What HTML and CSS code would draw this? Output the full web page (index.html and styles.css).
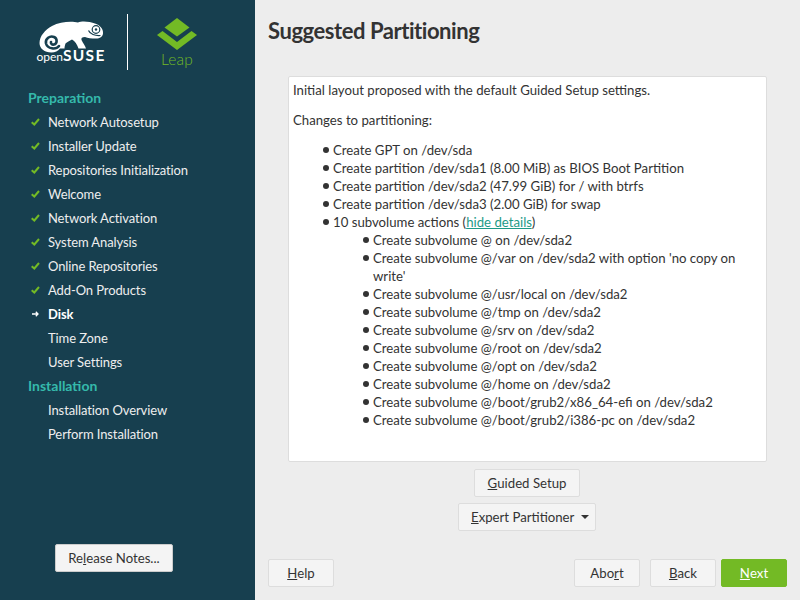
FILE: index.html
```html
<!DOCTYPE html>
<html lang="en">
<head>
<meta charset="utf-8">
<title>Suggested Partitioning</title>
<link rel="stylesheet" href="styles.css">
</head>
<body>
<div class="app">
  <aside class="sidebar">
    <header class="logos">
      <svg class="logo-suse" width="80" height="60" viewBox="30 10 80 60">
        <path class="white" d="M39.500 43C39.500 36 45 30 52 26C60 21.500 72 21 78 22.500C82 20.500 90 21.500 95 23.500C100 25 103.500 29 103 33.500C102.500 37 100 38.500 96 38.500C91 38.500 88 38 85 37C82 37 81 38 81.500 40C83 43 85 45.500 86 48.500L78.500 48.500C77 44.500 75 41 72 39.500C69.500 41 67 42 65.500 43.500C65 45 64.500 47 64.500 48.500L60 48.500C58 51 55 52.500 51.500 52.500C44.500 52.500 39.500 48.500 39.500 43Z"/>
        <path class="cut" d="M59 46C56 50 47.500 49 46 43.500C45 38.500 50 35.500 54 37C57.500 38.500 57.500 43.500 54 44.500C52 45 50.500 43.500 51 42"/>
        <circle class="cut-thin" cx="96" cy="29.500" r="3.800"/>
        <circle class="cut-fill" cx="96" cy="29.500" r="1.200"/>
        <path class="cut-thin" d="M88.500 30.500C90 34 95 36 100.500 35.500"/>
        <text class="suse-open" x="36.500" y="60.500">open</text>
        <text class="suse-bold" x="63" y="60.500">SUSE</text>
      </svg>
      <div class="logo-rule"></div>
      <svg class="logo-leap" width="50" height="60" viewBox="152 14 50 60">
        <path class="green" d="M177 18L189.500 27.500L177 36.500L164.500 27.500Z"/>
        <path class="green" d="M157 35L162.500 31L177 42L191.500 31L197 35L177 50Z"/>
        <text class="leap-text" x="161" y="65">Leap</text>
      </svg>
    </header>
    <nav class="steps">
      <div class="stage">Preparation</div>
      <div class="step"><svg class="mark" width="9" height="8" viewBox="0 0 9 8"><path class="check" d="M.7 4.200L3.300 6.500L8 1"/></svg>Network Autosetup</div>
      <div class="step"><svg class="mark" width="9" height="8" viewBox="0 0 9 8"><path class="check" d="M.7 4.200L3.300 6.500L8 1"/></svg>Installer Update</div>
      <div class="step"><svg class="mark" width="9" height="8" viewBox="0 0 9 8"><path class="check" d="M.7 4.200L3.300 6.500L8 1"/></svg>Repositories Initialization</div>
      <div class="step"><svg class="mark" width="9" height="8" viewBox="0 0 9 8"><path class="check" d="M.7 4.200L3.300 6.500L8 1"/></svg>Welcome</div>
      <div class="step"><svg class="mark" width="9" height="8" viewBox="0 0 9 8"><path class="check" d="M.7 4.200L3.300 6.500L8 1"/></svg>Network Activation</div>
      <div class="step"><svg class="mark" width="9" height="8" viewBox="0 0 9 8"><path class="check" d="M.7 4.200L3.300 6.500L8 1"/></svg>System Analysis</div>
      <div class="step"><svg class="mark" width="9" height="8" viewBox="0 0 9 8"><path class="check" d="M.7 4.200L3.300 6.500L8 1"/></svg>Online Repositories</div>
      <div class="step"><svg class="mark" width="9" height="8" viewBox="0 0 9 8"><path class="check" d="M.7 4.200L3.300 6.500L8 1"/></svg>Add-On Products</div>
      <div class="step current"><svg class="mark" width="9" height="8" viewBox="0 0 9 8"><path class="arrow" d="M1 4H7M4.800 1.800L7 4L4.800 6.200"/></svg>Disk</div>
      <div class="step"><span class="mark"></span>Time Zone</div>
      <div class="step"><span class="mark"></span>User Settings</div>
      <div class="stage">Installation</div>
      <div class="step"><span class="mark"></span>Installation Overview</div>
      <div class="step"><span class="mark"></span>Perform Installation</div>
    </nav>
    <div class="side-foot"><button class="btn notes">Re<u>l</u>ease Notes...</button></div>
  </aside>
  <main class="main">
    <h1 class="title">Suggested Partitioning</h1>
    <section class="panel">
      <p>Initial layout proposed with the default Guided Setup settings.</p>
      <p>Changes to partitioning:</p>
      <ul>
        <li>Create GPT on /dev/sda</li>
        <li>Create partition /dev/sda1 (8.00 MiB) as BIOS Boot Partition</li>
        <li>Create partition /dev/sda2 (47.99 GiB) for / with btrfs</li>
        <li>Create partition /dev/sda3 (2.00 GiB) for swap</li>
        <li>10 subvolume actions (<a href="#">hide details</a>)
          <ul>
            <li>Create subvolume @ on /dev/sda2</li>
            <li>Create subvolume @/var on /dev/sda2 with option 'no copy on write'</li>
            <li>Create subvolume @/usr/local on /dev/sda2</li>
            <li>Create subvolume @/tmp on /dev/sda2</li>
            <li>Create subvolume @/srv on /dev/sda2</li>
            <li>Create subvolume @/root on /dev/sda2</li>
            <li>Create subvolume @/opt on /dev/sda2</li>
            <li>Create subvolume @/home on /dev/sda2</li>
            <li>Create subvolume @/boot/grub2/x86_64-efi on /dev/sda2</li>
            <li>Create subvolume @/boot/grub2/i386-pc on /dev/sda2</li>
          </ul>
        </li>
      </ul>
    </section>
    <div class="actions">
      <button class="btn guided"><u>G</u>uided Setup</button>
      <button class="btn expert"><span><u>E</u>xpert Partitioner</span><span class="caret"></span></button>
    </div>
    <footer class="nav-row">
      <button class="btn wide"><u>H</u>elp</button>
      <div class="nav-right">
        <button class="btn wide">Abo<u>r</u>t</button>
        <button class="btn wide back"><u>B</u>ack</button>
        <button class="btn wide next"><u>N</u>ext</button>
      </div>
    </footer>
  </main>
</div>
</body>
</html>
```
FILE: styles.css
```css
* { box-sizing: border-box; }
html, body { margin: 0; height: 100%; }
body { font-family: "Lato", "Noto Sans", sans-serif; font-size: 13.200px; line-height: 18px; color: #333; }
.app { display: flex; width: 800px; height: 600px; overflow: hidden; background: #ededed; }

.sidebar { width: 255px; flex: none; background: #173f4f; display: flex; flex-direction: column; color: #eee; }
.logos { height: 86px; display: flex; align-items: flex-start; padding: 10px 0 0 30px; }
.logo-rule { width: 1px; height: 56px; margin: 4px 0 0 17px; background: #fff; }
.logo-leap { margin-left: 24px; margin-top: 4px; }
.white { fill: #fff; }
.green { fill: #73ba25; }
.cut { fill: none; stroke: #173f4f; stroke-width: 2.600; stroke-linecap: round; }
.cut-thin { fill: none; stroke: #173f4f; stroke-width: 1.200; }
.cut-fill { fill: #173f4f; }
.suse-open { fill: #fff; font-family: "Lato", sans-serif; font-size: 12px; font-weight: 400; }
.suse-bold { fill: #fff; font-family: "Lato", sans-serif; font-size: 15.500px; font-weight: 700; letter-spacing: 1.300px; }
.leap-text { fill: #73ba25; font-family: "Lato", sans-serif; font-size: 15.500px; font-weight: 300; letter-spacing: .2px; }

.steps { display: flex; flex-direction: column; padding-left: 28px; }
.stage { height: 24px; line-height: 24px; font-size: 14px; font-weight: 700; color: #35b9ab; }
.step { height: 24px; display: flex; align-items: center; white-space: nowrap; font-size: 13px; letter-spacing: -0.100px; }
.mark { flex: none; overflow: visible; margin-left: 3px; margin-right: 8px; width: 9px; }
.check { fill: none; stroke: #73ba25; stroke-width: 2; }
.arrow { fill: none; stroke: #fff; stroke-width: 1.300; }
.current { font-weight: 700; color: #fff; }
.side-foot { margin-top: auto; padding: 0 0 28px 55px; }

.btn { font: inherit; color: #333; background: #f4f4f4; border: 1px solid #ddd; border-radius: 2px; height: 28px; padding: 0; display: inline-flex; align-items: center; justify-content: center; }
.notes { width: 118px; border-color: #ccc; }
.wide { width: 66px; }
.guided { width: 106px; }
.expert { width: 138px; justify-content: flex-start; padding-left: 12px; gap: 7px; }
.caret { width: 0; height: 0; border: 4px solid transparent; border-top: 4px solid #333; border-bottom: 0; }
.next { background: #73ba25; border-color: #73ba25; color: #fff; margin-left: -5px; }

.main { flex: 1; display: flex; flex-direction: column; padding: 0 13px 13px; min-width: 0; }
.title { margin: 0; height: 76px; padding-top: 15px; font-size: 22px; letter-spacing: -0.450px; line-height: 32px; font-weight: 700; color: #333; white-space: nowrap; }
.panel { margin: 0 20px; height: 386px; background: #fff; border: 1px solid #ddd; border-radius: 2px; padding: 4px; }
.panel p { margin: 0 0 12px; }
.panel ul { margin: 0; padding-left: 40px; list-style: none; }
.panel li { position: relative; }
.panel li::before { content: ""; position: absolute; left: -10px; top: 6px; width: 6px; height: 6px; border-radius: 50%; background: #333; }
.panel > ul { margin-top: 12px; }
.panel a { color: #1d9a87; }
.actions { display: flex; flex-direction: column; align-items: center; gap: 6px; margin-top: 7px; padding-right: 1px; }
.nav-row { display: flex; justify-content: space-between; margin-top: auto; }
.nav-right { display: flex; gap: 10px; }
```
